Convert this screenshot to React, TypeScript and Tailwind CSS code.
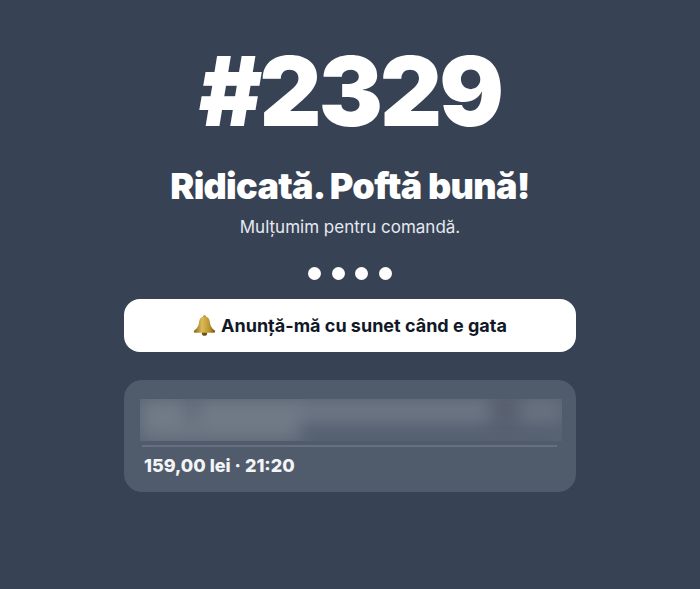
import React from "react";

const font = "font-['Inter','Noto_Sans',sans-serif]";

const Bell = () => (
    <svg width="23" height="21" viewBox="0 0 23 21" className="shrink-0">
        <defs>
            <linearGradient id="bellBody" x1="0" y1="0" x2="1" y2="0">
                <stop offset="0" stopColor="#7f661c" />
                <stop offset="0.38" stopColor="#dcbb58" />
                <stop offset="0.72" stopColor="#bd952e" />
                <stop offset="1" stopColor="#6f5716" />
            </linearGradient>
        </defs>
        <circle cx="11.5" cy="2" r="1.7" fill="#a98a2c" />
        <circle cx="11.5" cy="18.2" r="2.6" fill="#6d5518" />
        <path
            d="M11.5 1.5C7.6 1.5 6.4 4.4 6 7.6 5.6 11 4.6 13.2 1.2 15.4.5 16 .8 17.6 2 17.7h19c1.2-.1 1.5-1.7.8-2.3-3.4-2.2-4.4-4.4-4.8-7.8-.4-3.2-1.6-6.1-5.5-6.1Z"
            fill="url(#bellBody)"
        />
    </svg>
);

const App = () => {
    return (
        <div className={`${font} min-h-[589px] bg-[#374254] flex flex-col items-center text-white`}>
            <h1 className="mt-[33px] text-[96px] leading-[116px] font-black tracking-[-0.03em]">#2329</h1>
            <h2 className="mt-[15px] text-[36px] leading-[44px] font-black tracking-[-0.02em]">Ridicată. Poftă bună!</h2>
            <p className="mt-[7px] text-[17px] leading-[24px] text-[#e5e9f0]">Mulțumim pentru comandă.</p>

            <div className="mt-[28px] flex gap-[10.5px]">
                <span className="w-[13px] h-[13px] rounded-full bg-white" />
                <span className="w-[13px] h-[13px] rounded-full bg-white" />
                <span className="w-[13px] h-[13px] rounded-full bg-white" />
                <span className="w-[13px] h-[13px] rounded-full bg-white" />
            </div>

            <button className="mt-[19px] w-[452px] h-[53px] rounded-[16px] bg-white text-[#111827] flex items-center justify-center gap-[5px] text-[18px] font-bold">
                <Bell />
                Anunță-mă cu sunet când e gata
            </button>

            <div className="mt-[28px] w-[452px] h-[112px] rounded-[18px] bg-[#505b6c] px-[16px] pt-[19px]">
                <div className="w-[422px] h-[42px] overflow-hidden bg-[#586273]">
                    <div className="blur-[8px]">
                        <div className="flex h-[24px]">
                            <div className="w-[45px] bg-[#727b88]" />
                            <div className="w-[15px] bg-[#646d7c]" />
                            <div className="w-[100px] bg-[#717a87]" />
                            <div className="w-[190px] bg-[#6c7684]" />
                            <div className="w-[30px] bg-[#596170]" />
                            <div className="w-[42px] bg-[#687280]" />
                        </div>
                        <div className="flex h-[18px]">
                            <div className="w-[160px] bg-[#6f7885]" />
                            <div className="w-[262px] bg-[#566071]" />
                        </div>
                    </div>
                </div>
                <div className="mt-[4px] ml-[2px] w-[415px] h-[2px] bg-[#667081]" />
                <p className="mt-[7px] ml-[4px] text-[18px] leading-[24px] font-extrabold text-[#f3f4f6]">159,00 lei · 21:20</p>
            </div>
        </div>
    );
};

export default App;
